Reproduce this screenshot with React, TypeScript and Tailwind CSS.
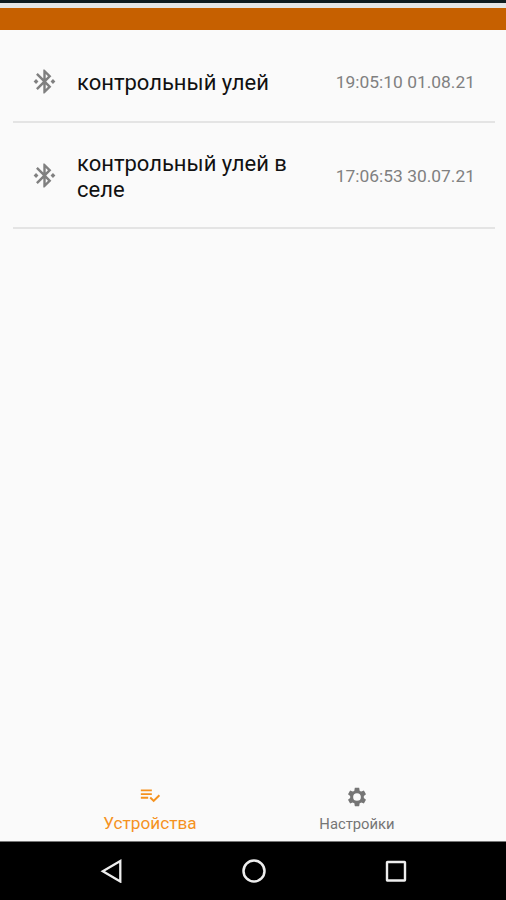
type Device = { name: string; seen: string; height: string };

const devices: Device[] = [
  { name: "контрольный улей", seen: "19:05:10 01.08.21", height: "h-[82px]" },
  { name: "контрольный улей в селе", seen: "17:06:53 30.07.21", height: "h-[106px]" },
];

function BluetoothIcon() {
  return (
    <svg viewBox="0 0 24 24" className="size-[29px] shrink-0 fill-[#808080]">
      <path d="M7 12l-2-2-2 2 2 2 2-2zm10.71-4.29L12 2h-1v7.59L6.41 5 5 6.41 10.59 12 5 17.59 6.41 19 11 14.41V22h1l5.71-5.71-4.3-4.29 4.3-4.29zM13 5.83l1.88 1.88L13 9.59V5.83zm1.88 10.46L13 18.17v-3.76l1.88 1.88zM19 10l-2 2 2 2 2-2-2-2z" />
    </svg>
  );
}

function DeviceRow({ name, seen, height }: Device) {
  return (
    <li className={`flex items-center border-b-2 border-[#e4e4e4] pr-5 pl-[17px] ${height}`}>
      <BluetoothIcon />
      <span className="ml-[18px] w-[230px] pt-[3px] text-[22px] leading-[26px] text-[#111]">{name}</span>
      <span className="ml-auto pt-0.5 text-[17.4px] leading-5 whitespace-nowrap text-[#808080]">{seen}</span>
    </li>
  );
}

export default function App() {
  return (
    <div className="flex h-[900px] w-[506px] flex-col overflow-hidden bg-[#fafafa] font-['Roboto','Noto_Sans',sans-serif]">
      <div className="h-[3px] shrink-0 bg-[#101c20]" />
      <div className="h-[5px] shrink-0 bg-[#e6e6e6]" />
      <header className="h-[22px] shrink-0 bg-[#c66000]" />
      <main className="flex-1 pt-[11px] pr-[11px] pl-[13px]">
        <ul>
          {devices.map((d) => (
            <DeviceRow key={d.seen} {...d} />
          ))}
        </ul>
      </main>
      <nav className="flex h-[66px] shrink-0 justify-center">
        <a className="flex w-[207px] flex-col items-center pt-[9px] text-[#f5921e]">
          <svg viewBox="0 0 24 24" className="size-[22px] fill-current">
            <path d="M14 10H2v2h12v-2zm0-4H2v2h12V6zM2 16h8v-2H2v2zm19.5-4.5L23 13l-6.99 7-4.51-4.5L13 14l3.01 3 5.49-5.5z" />
          </svg>
          <span className="mt-[7px] ml-px text-[17.2px] leading-5">Устройства</span>
        </a>
        <a className="flex w-[207px] flex-col items-center pt-[11px] text-[#757575]">
          <svg viewBox="0 0 24 24" className="size-[22px] fill-current">
            <path
              fillRule="evenodd"
              d="M19.43 12.98c.04-.32.07-.64.07-.98s-.03-.66-.07-.98l2.11-1.65c.19-.15.24-.42.12-.64l-2-3.46c-.12-.22-.39-.3-.61-.22l-2.49 1c-.52-.4-1.08-.73-1.69-.98l-.38-2.65C14.46 2.18 14.25 2 14 2h-4c-.25 0-.46.18-.49.42l-.38 2.65c-.61.25-1.17.59-1.69.98l-2.49-1c-.23-.09-.49 0-.61.22l-2 3.46c-.13.22-.07.49.12.64l2.11 1.65c-.04.32-.07.65-.07.98s.03.66.07.98l-2.11 1.65c-.19.15-.24.42-.12.64l2 3.46c.12.22.39.3.61.22l2.49-1c.52.4 1.08.73 1.69.98l.38 2.65c.03.24.24.42.49.42h4c.25 0 .46-.18.49-.42l.38-2.65c.61-.25 1.17-.59 1.69-.98l2.49 1c.23.09.49 0 .61-.22l2-3.46c.12-.22.07-.49-.12-.64l-2.11-1.65zM12 16.2a4.2 4.2 0 1 1 0-8.4a4.2 4.2 0 1 1 0 8.4z"
            />
          </svg>
          <span className="mt-[6px] ml-px text-[14.8px] leading-5">Настройки</span>
        </a>
      </nav>
      <footer className="flex h-[59px] shrink-0 items-center justify-between border-t border-[#777] bg-black pr-[98px] pl-[99px]">
        <svg viewBox="0 0 24 24" className="size-6 fill-none stroke-[#eee] stroke-[2.3]">
          <path d="M21.3 2v20.5L3.8 12.2z" />
        </svg>
        <svg viewBox="0 0 24 24" className="size-6 fill-none stroke-[#eee] stroke-[2.5]">
          <circle cx="12" cy="12" r="10.5" />
        </svg>
        <svg viewBox="0 0 24 24" className="size-6 fill-none stroke-[#eee] stroke-[2.4]">
          <rect x="3" y="3" width="18" height="18.5" rx="0.5" />
        </svg>
      </footer>
    </div>
  );
}
